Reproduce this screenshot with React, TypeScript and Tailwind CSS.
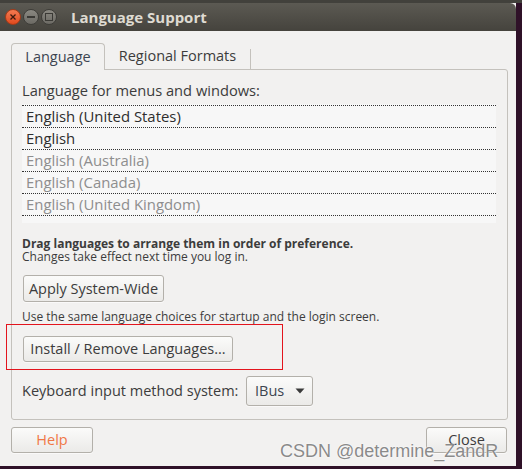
import React from "react";

const font = { fontFamily: '"Open Sans", "Noto Sans", sans-serif' };

function Btn({ children, className = "" }: { children: React.ReactNode; className?: string }) {
  return (
    <div
      className={
        "flex items-center justify-center rounded-[3px] border border-[#b3b0aa] bg-gradient-to-b from-[#fbfbfa] to-[#ebeae8] shadow-[0_1px_0_rgba(255,255,255,0.6)] text-[14.5px] text-[#3c3c3c] " +
        className
      }
    >
      {children}
    </div>
  );
}

export default function App() {
  const rows: [string, boolean][] = [
    ["English (United States)", true],
    ["English", true],
    ["English (Australia)", false],
    ["English (Canada)", false],
    ["English (United Kingdom)", false],
  ];
  return (
    <div className="relative w-[522px] h-[469px] bg-[#2f1128] overflow-hidden" style={font}>
      <div className="w-[516px] h-[466px] flex flex-col bg-[#f2f1f0]">
        {/* title bar */}
        <div className="h-[3px] bg-[#42413c] w-[522px]" />
        <div className="h-[28px] flex items-center rounded-tr-[6px] bg-gradient-to-b from-[#5c5a53] to-[#45433d]">
          <div className="ml-[5px] w-[16px] h-[16px] rounded-full bg-gradient-to-b from-[#f47a50] to-[#e0491c] border border-[#a63a17] flex items-center justify-center">
            <svg width="8" height="8" viewBox="0 0 8 8">
              <path d="M1.5 1.5 L6.5 6.5 M6.5 1.5 L1.5 6.5" stroke="#3b1a0e" strokeWidth="1.3" />
            </svg>
          </div>
          <div className="ml-[2px] w-[16px] h-[16px] rounded-full bg-gradient-to-b from-[#8a8881] to-[#6c6a64] border border-[#3e3d39] flex items-center justify-center">
            <div className="w-[8px] h-[2px] bg-[#3a3935]" />
          </div>
          <div className="ml-[2px] w-[16px] h-[16px] rounded-full bg-gradient-to-b from-[#8a8881] to-[#6c6a64] border border-[#3e3d39] flex items-center justify-center">
            <div className="w-[8px] h-[8px] border-[1.5px] border-[#3a3935]" />
          </div>
          <div className="ml-[14px] text-[15px] font-bold text-[#dfdbd2] leading-none">Language Support</div>
        </div>

        {/* body */}
        <div className="flex flex-col pl-[11px] pt-[12px]">
          {/* tabs */}
          <div className="flex h-[26px] items-end">
            <div className="relative z-10 -mb-px h-[27px] w-[94px] rounded-t-[4px] border border-b-0 border-[#c4c1bc] bg-[#f2f1f0] flex items-center justify-center pb-[1px] text-[14.5px] text-[#3c4450]">
              Language
            </div>
            <div className="h-[20px] w-[146px] border-r border-[#c4c1bc] flex items-center justify-center text-[14.5px] text-[#3c3c3c] pb-[6px]">
              Regional Formats
            </div>
          </div>
          {/* frame */}
          <div className="w-[497px] h-[351px] border border-[#c4c1bc] rounded-b-[3px] rounded-tr-[3px] flex flex-col pl-[10px] pr-[11px]">
            <div className="mt-[10px] h-[20px] leading-[20px] text-[14.67px] text-[#3c3c3c]">Language for menus and windows:</div>
            <div className="mt-[4px] bg-[#f7f7f7] pt-px pb-[7px]">
              <div className="border-t border-dotted border-[#333]">
                {rows.map(([t, dark]) => (
                  <div
                    key={t}
                    className={
                      "h-[22px] border-b border-dotted border-[#333] pl-[4px] flex items-center text-[14.9px] " +
                      (dark ? "text-[#2e2e2e]" : "text-[#8e8e8e]")
                    }
                  >
                    {t}
                  </div>
                ))}
              </div>
            </div>
            <div className="mt-[14px] text-[12px] leading-[13px] font-bold text-[#3c3c3c]">
              Drag languages to arrange them in order of preference.
            </div>
            <div className="text-[12px] leading-[13px] text-[#3c3c3c]">Changes take effect next time you log in.</div>
            <Btn className="mt-[12px] ml-px w-[141px] h-[27px]">Apply System-Wide</Btn>
            <div className="mt-[8px] text-[12px] leading-[13px] text-[#3c3c3c]">
              Use the same language choices for startup and the login screen.
            </div>
            <Btn className="mt-[13px] ml-px w-[210px] h-[26px]">Install / Remove Languages...</Btn>
            <div className="mt-[14px] flex items-center h-[30px]">
              <div className="w-[224px] text-[14.5px] text-[#3c3c3c] whitespace-nowrap">Keyboard input method system:</div>
              <Btn className="w-[67px] h-[30px] !justify-start pl-[8px]">
                <span className="text-[#3c4450]">IBus</span>
                <svg className="ml-[11px]" width="10" height="6" viewBox="0 0 10 6">
                  <path d="M0.5 0.5 L9.5 0.5 L5 5.5 Z" fill="#3a3a3a" />
                </svg>
              </Btn>
            </div>
          </div>
          {/* bottom buttons */}
          <div className="mt-[7px] flex w-[497px] justify-between">
            <Btn className="w-[82px] h-[26px] !text-[#f07746]">Help</Btn>
            <Btn className="w-[81px] h-[26px] mr-px items-start pt-px">Close</Btn>
          </div>
        </div>
      </div>

      {/* red annotation rectangle */}
      <div className="absolute left-[6px] top-[324px] w-[277px] h-[46px] border border-[#e3141d]" />

      {/* watermark */}
      <div
        className="absolute left-[280px] top-[440px] text-[18px] leading-[22px] text-[#8a8a8a] whitespace-nowrap"
        style={{ fontFamily: '"Liberation Sans", Arial, sans-serif', textShadow: "0 0 2px #fff, 0 0 1px #fff" }}
      >
        CSDN @determine_ZandR
      </div>
    </div>
  );
}
